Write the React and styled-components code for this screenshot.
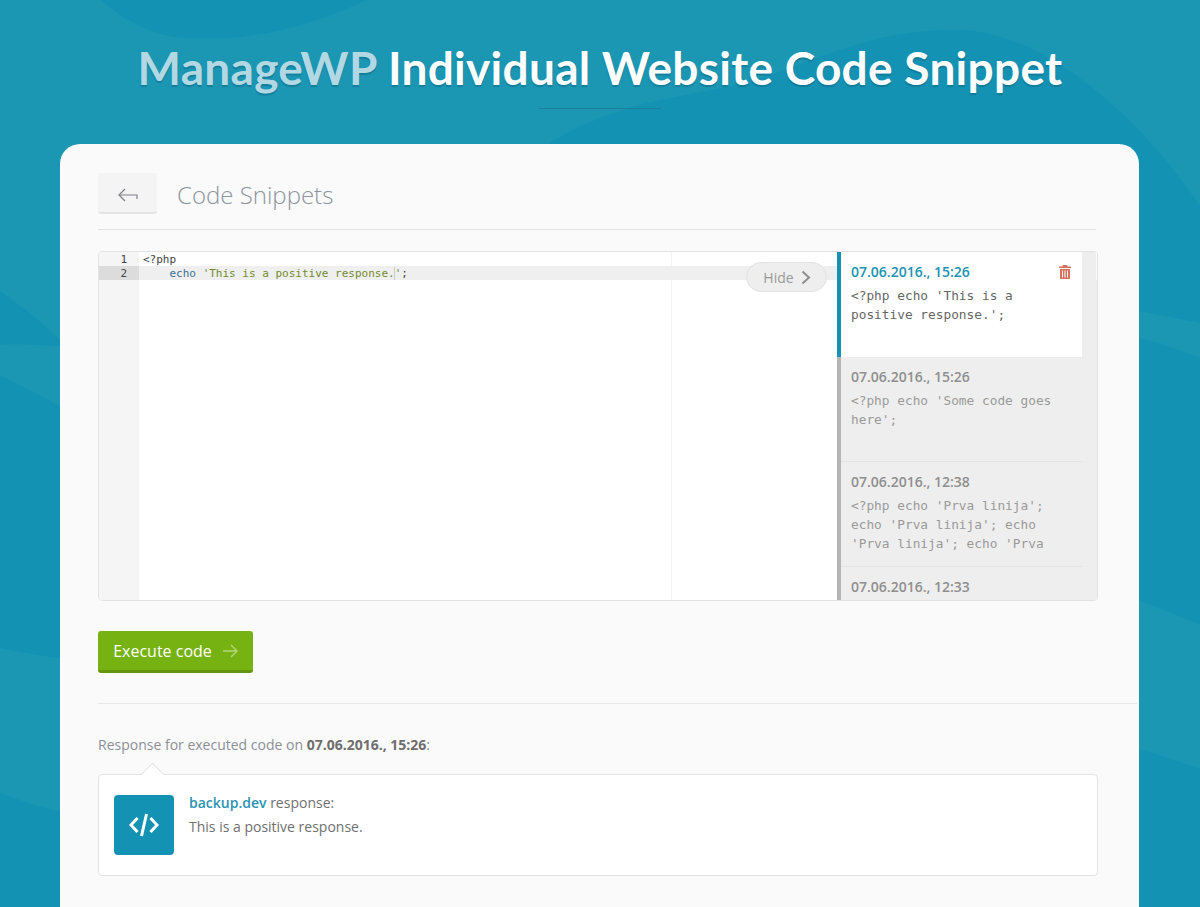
import React from 'react';
import styled, { createGlobalStyle } from 'styled-components';

const GlobalStyle = createGlobalStyle`
  html, body {
    margin: 0;
    padding: 0;
    height: 907px;
    overflow: hidden;
    background: #1492b3;
  }
  body {
    font-family: "Open Sans", "Noto Sans", sans-serif;
  }
`;

const Page = styled.div`
  position: relative;
  height: 907px;
  overflow: hidden;
  background: #1492b3;
`;

const Waves = styled.svg`
  position: absolute;
  inset: 0;
`;

const Header = styled.header`
  position: relative;
  height: 144px;
  display: flex;
  flex-direction: column;
  align-items: center;
`;

const Title = styled.h1`
  margin: 38px 0 0;
  font-family: Lato, "Open Sans", sans-serif;
  font-size: 46px;
  line-height: 60px;
  font-weight: 700;
  letter-spacing: 0.28px;
  color: #fff;
  white-space: nowrap;
  text-shadow: 0 2px 1px rgba(10, 95, 125, 0.45);
`;

const Brand = styled.span`
  color: #b2d9e3;
`;

const TitleRule = styled.div`
  width: 122px;
  height: 1px;
  margin-top: 10px;
  background: #1a7f9b;
`;

const Card = styled.main`
  position: relative;
  margin: 0 61px 0 60px;
  height: 763px;
  padding: 29px 0 0 38px;
  box-sizing: border-box;
  background: #fafafa;
  border-radius: 20px 20px 0 0;
`;

const TopBar = styled.div`
  width: 998px;
  height: 57px;
  box-sizing: border-box;
  display: flex;
  align-items: flex-start;
  gap: 20px;
  border-bottom: 1px solid #e2e2e2;
`;

const BackButton = styled.button`
  width: 59px;
  height: 41px;
  padding: 4px 0 0;
  display: flex;
  align-items: center;
  justify-content: center;
  background: #f4f4f4;
  border: 0;
  border-bottom: 2px solid #e4e4e4;
  border-radius: 3px;
`;

const PageName = styled.h2`
  margin: 0;
  font-size: 24px;
  line-height: 44px;
  font-weight: 300;
  color: #8c94a0;
`;

const Editor = styled.section`
  margin-top: 21px;
  width: 1000px;
  height: 350px;
  box-sizing: border-box;
  display: flex;
  position: relative;
  background: #fff;
  border: 1px solid #e3e3e3;
  border-radius: 4px;
  overflow: hidden;
`;

const Gutter = styled.div`
  width: 40px;
  flex: none;
  background: #f5f5f5;
`;

const LineNumber = styled.div`
  height: 14px;
  padding-right: 12px;
  text-align: right;
  font: 11px/16px "DejaVu Sans Mono", monospace;
  color: #444;
  background: ${({ $active }) => ($active ? '#dcdcdc' : 'transparent')};
`;

const CodeArea = styled.div`
  flex: 1;
  position: relative;
  min-width: 0;
`;

const PrintMargin = styled.div`
  position: absolute;
  top: 0;
  bottom: 0;
  left: 532px;
  width: 1px;
  background: #f3f3f3;
`;

const CodeLine = styled.div`
  position: relative;
  height: 14px;
  padding-left: 4px;
  font: 11px/16px "DejaVu Sans Mono", monospace;
  white-space: pre;
  color: #444;
  background: ${({ $active }) => ($active ? '#efefef' : 'transparent')};
`;

const Keyword = styled.span`
  color: #3c6f96;
`;

const Str = styled.span`
  color: #738a2c;
`;

const Caret = styled.span`
  border-left: 1px solid #ccc;
  margin-left: -1px;
`;

const HideButton = styled.button`
  position: absolute;
  top: 10px;
  left: 607px;
  width: 81px;
  height: 30px;
  padding: 0 0 0 1px;
  display: flex;
  align-items: center;
  justify-content: center;
  gap: 7px;
  box-sizing: border-box;
  background: #eeeeee;
  border: 1px solid #e2e2e2;
  border-radius: 15px;
  font-family: inherit;
  font-size: 14px;
  color: #999;
`;

const Sidebar = styled.aside`
  width: 260px;
  flex: none;
  background: #eeeeee;
  display: flex;
  flex-direction: column;
  position: relative;
`;

const ScrollCap = styled.div`
  position: absolute;
  top: 0;
  right: 0;
  width: 15px;
  height: 28px;
  background: #eeeeee;
  border-right: 1px solid #fafafa;
  box-sizing: border-box;
`;

const Snippet = styled.article`
  flex: none;
  width: 245px;
  height: 105px;
  box-sizing: border-box;
  padding: 10px 30px 0 10px;
  position: relative;
  border-left: 4px solid ${({ $active }) => ($active ? '#1492b3' : '#b5b5b5')};
  background: ${({ $active }) => ($active ? '#fff' : 'transparent')};
  box-shadow: ${({ $active }) => ($active ? 'none' : 'inset 0 -1px 0 #e4e4e4')};
`;

const SnippetDate = styled.div`
  font-size: 14px;
  line-height: 19px;
  font-weight: 600;
  color: ${({ $active }) => ($active ? '#1b93b3' : '#8f8f8f')};
`;

const SnippetCode = styled.div`
  margin-top: 5px;
  font: 12.8px/19px "DejaVu Sans Mono", monospace;
  color: ${({ $active }) => ($active ? '#666' : '#9a9a9a')};
`;

const TrashIcon = styled.svg`
  position: absolute;
  top: 13px;
  right: 11px;
`;

const ExecuteButton = styled.button`
  margin-top: 30px;
  width: 155px;
  height: 42px;
  padding: 0;
  display: flex;
  align-items: center;
  justify-content: center;
  gap: 11px;
  box-sizing: border-box;
  background: #76b212;
  border: 0;
  border-bottom: 3px solid #62960f;
  border-radius: 3px;
  font-family: inherit;
  font-size: 16px;
  color: #fff;
`;

const SectionRule = styled.hr`
  margin: 30px 2px 0 0;
  border: 0;
  border-top: 1px solid #e8e8e8;
`;

const ResponseLabel = styled.p`
  margin: 32px 0 0;
  font-size: 14px;
  line-height: 18px;
  color: #8a8f96;

  strong {
    font-weight: 700;
    color: #6e6e6e;
  }
`;

const ResponseBox = styled.section`
  position: relative;
  margin-top: 20px;
  width: 1000px;
  height: 102px;
  box-sizing: border-box;
  padding: 20px 15px;
  display: flex;
  gap: 15px;
  background: #fff;
  border: 1px solid #e3e3e3;
  border-radius: 4px;

  &::before {
    content: '';
    position: absolute;
    top: -9px;
    left: 45px;
    width: 16px;
    height: 16px;
    background: #fff;
    border-top: 1px solid #e3e3e3;
    border-left: 1px solid #e3e3e3;
    transform: rotate(45deg);
  }
`;

const SiteIcon = styled.div`
  width: 60px;
  height: 60px;
  flex: none;
  display: flex;
  align-items: center;
  justify-content: center;
  background: #1492b3;
  border-radius: 4px;
`;

const ResponseText = styled.div`
  font-size: 14px;
  line-height: 24px;
  color: #6f6f6f;
  margin-top: -4px;
`;

const SiteName = styled.span`
  font-weight: 600;
  color: #2a93b1;
`;

export default function App() {
  return (
    <Page>
      <GlobalStyle />
      <Waves width="1200" height="907" viewBox="0 0 1200 907">
        <g fill="#1b97b4">
          <path d="M0 0H100C130 25 160 38 190 38C240 40 290 35 367 0H1200V206C1150 130 1050 30 957 30C880 30 840 50 765 77C690 100 620 95 540 150C450 210 380 270 283 340H60C40 320 20 305 0 291Z" />
          <path d="M0 345C20 344 40 345 60 346V406C40 395 20 385 0 375Z" />
          <path d="M0 648C20 652 40 656 60 658V811C40 808 20 800 0 793Z" />
          <path d="M1139 311C1160 315 1180 319 1200 323V358C1180 350 1160 343 1139 338Z" />
          <path d="M1139 601C1160 608 1180 616 1200 625V769C1180 762 1160 755 1139 749Z" />
        </g>
      </Waves>

      <Header>
        <Title><Brand>ManageWP</Brand> Individual Website Code Snippet</Title>
        <TitleRule />
      </Header>

      <Card>
        <TopBar>
          <BackButton aria-label="Back">
            <svg width="20" height="14" viewBox="0 0 20 14" fill="none" stroke="#7d7d85" strokeWidth="1.2">
              <path d="M7 1L1 7L7 13" />
              <path d="M1 7H19V11" />
            </svg>
          </BackButton>
          <PageName>Code Snippets</PageName>
        </TopBar>

        <Editor>
          <Gutter>
            <LineNumber>1</LineNumber>
            <LineNumber $active>2</LineNumber>
          </Gutter>
          <CodeArea>
            <PrintMargin />
            <CodeLine>{'<?php'}</CodeLine>
            <CodeLine $active>
              {'    '}<Keyword>echo</Keyword> <Str>'This is a positive response.<Caret />'</Str>;
            </CodeLine>
            <HideButton>
              Hide
              <svg width="10" height="15" viewBox="0 0 10 15" fill="none" stroke="#8f8f8f" strokeWidth="2">
                <path d="M1.5 1.5L8 7.5L1.5 13.5" />
              </svg>
            </HideButton>
          </CodeArea>
          <Sidebar>
            <ScrollCap />
            <Snippet $active>
              <SnippetDate $active>07.06.2016., 15:26</SnippetDate>
              <SnippetCode $active>{"<?php echo 'This is a positive response.';"}</SnippetCode>
              <TrashIcon width="12" height="14" viewBox="0 0 12 14" fill="#d9705f">
                <path d="M4 0H8L8.6 1.5H12V3H0V1.5H3.4Z" />
                <path d="M1 4H11V13C11 13.6 10.6 14 10 14H2C1.4 14 1 13.6 1 13ZM3 5.5V12.5H4V5.5ZM5.5 5.5V12.5H6.5V5.5ZM8 5.5V12.5H9V5.5Z" fillRule="evenodd" />
              </TrashIcon>
            </Snippet>
            <Snippet>
              <SnippetDate>07.06.2016., 15:26</SnippetDate>
              <SnippetCode>{"<?php echo 'Some code goes here';"}</SnippetCode>
            </Snippet>
            <Snippet>
              <SnippetDate>07.06.2016., 12:38</SnippetDate>
              <SnippetCode>{"<?php echo 'Prva linija'; echo 'Prva linija'; echo 'Prva linija'; echo 'Prva"}</SnippetCode>
            </Snippet>
            <Snippet>
              <SnippetDate>07.06.2016., 12:33</SnippetDate>
            </Snippet>
          </Sidebar>
        </Editor>

        <ExecuteButton>
          Execute code
          <svg width="15" height="14" viewBox="0 0 15 14" fill="none" stroke="#b5d67c" strokeWidth="1.4">
            <path d="M0 7H14M8 1L14 7L8 13" />
          </svg>
        </ExecuteButton>

        <SectionRule />

        <ResponseLabel>
          Response for executed code on <strong>07.06.2016., 15:26</strong>:
        </ResponseLabel>

        <ResponseBox>
          <SiteIcon>
            <svg width="30" height="24" viewBox="0 0 30 24" fill="none" stroke="#fff" strokeWidth="3">
              <path d="M8.5 5L2 12L8.5 19" />
              <path d="M21.5 5L28 12L21.5 19" />
              <path d="M17.5 1L12.5 23" />
            </svg>
          </SiteIcon>
          <ResponseText>
            <div><SiteName>backup.dev</SiteName> response:</div>
            <div>This is a positive response.</div>
          </ResponseText>
        </ResponseBox>
      </Card>
    </Page>
  );
}
